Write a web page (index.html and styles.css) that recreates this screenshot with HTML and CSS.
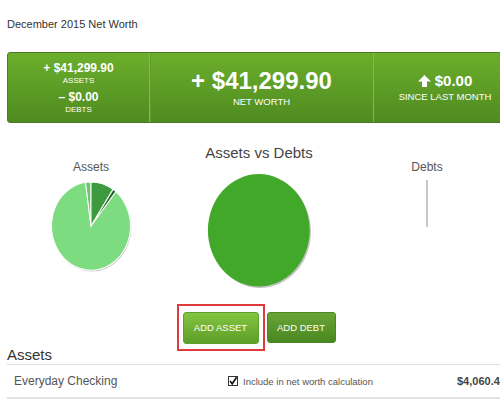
FILE: index.html
```html
<!DOCTYPE html>
<html>
	<head>
		<meta charset="utf-8">
		<title>Net Worth</title>
		<link rel="stylesheet" href="styles.css">
	</head>
	<body>
		<div id="page">
			<h1 class="page-title">December 2015 Net Worth</h1>

			<!-- 顶部汇总栏 -->
			<div class="summary">
				<div class="summary-cell">
					<div class="amount-sm">+ $41,299.90</div>
					<div class="label-sm">ASSETS</div>
					<div class="amount-sm debts">&ndash; $0.00</div>
					<div class="label-sm">DEBTS</div>
				</div>
				<div class="summary-cell">
					<div class="amount-lg">+ $41,299.90</div>
					<div class="label-md">NET WORTH</div>
				</div>
				<div class="summary-cell">
					<div class="amount-md">
						<svg class="arrow" width="13" height="12" viewBox="0 0 13 12">
							<polygon points="6.5,0 13,6.5 9,6.5 9,12 4,12 4,6.5 0,6.5" fill="#fff"/>
						</svg>$0.00
					</div>
					<div class="label-md">SINCE LAST MONTH</div>
				</div>
			</div>

			<!-- 图表 -->
			<div class="charts">
				<div class="chart side">
					<div class="chart-label">Assets</div>
					<svg class="pie-sm" width="84" height="94" viewBox="0 0 100 100" preserveAspectRatio="none">
						<circle cx="51" cy="51.5" r="47" fill="#c9c9c9"/>
						<g stroke="#fff" stroke-width="1.2">
							<path d="M50,50 L79.58,13.48 A47,47 0 1,1 43.46,3.47 Z" fill="#7ddc80"/>
							<path d="M50,50 L43.46,3.47 A47,47 0 0,1 50,3 Z" fill="#6cc56f"/>
							<path d="M50,50 L50,3 A47,47 0 0,1 76.28,11.04 Z" fill="#3e9a3f"/>
							<path d="M50,50 L76.28,11.04 A47,47 0 0,1 79.58,13.48 Z" fill="#1b671c"/>
						</g>
					</svg>
				</div>
				<div class="chart">
					<div class="chart-title">Assets vs Debts</div>
					<svg class="pie-lg" width="106" height="117" viewBox="0 0 100 100" preserveAspectRatio="none">
						<circle cx="51" cy="51.2" r="48" fill="#c4c4c4"/>
						<circle cx="49.8" cy="49.8" r="48" fill="#42a829"/>
					</svg>
				</div>
				<div class="chart side">
					<div class="chart-label">Debts</div>
					<div class="empty-bar"></div>
				</div>
			</div>

			<div class="actions">
				<a class="btn btn-asset" href="javascript:void(0);">ADD ASSET</a>
				<a class="btn btn-debt" href="javascript:void(0);">ADD DEBT</a>
			</div>

			<h2 class="section-title">Assets</h2>
			<div class="account-row">
				<div class="account-name">Everyday Checking</div>
				<div class="account-include">
					<svg class="check" width="10" height="10" viewBox="0 0 10 10">
						<rect x="0.5" y="0.5" width="9" height="9" fill="#fff" stroke="#333"/>
						<path d="M2,5 L4.2,7.8 L8.6,1.2" fill="none" stroke="#111" stroke-width="1.6"/>
					</svg>
					Include in net worth calculation
				</div>
				<div class="account-amount">$4,060.41</div>
			</div>
		</div>
	</body>
</html>
```

FILE: styles.css
```css
* {
	padding: 0;
	margin: 0;
	box-sizing: border-box;
}
html, body {
	width: 500px;
	height: 400px;
	overflow: hidden;
	background-color: #FFFFFF;
}
body {
	font-family: "Liberation Sans", Arial, sans-serif;
	color: #555;
}
#page {
	width: 517px;
	padding-left: 7px;
}
.page-title {
	margin-top: 17px;
	font-size: 11px;
	line-height: 14px;
	font-weight: normal;
	color: #333;
}

/* 汇总栏 */
.summary {
	display: flex;
	margin-top: 21px;
	height: 71px;
	border: 1px solid #4a7a26;
	border-radius: 3px;
	background: linear-gradient(#6cae2c, #4f8b20);
	color: #FFFFFF;
	text-align: center;
	overflow: hidden;
}
.summary-cell {
	display: flex;
	flex-direction: column;
	justify-content: center;
}
.summary-cell:nth-child(1) {
	width: 141px;
}
.summary-cell:nth-child(2) {
	width: 224px;
	border-left: 1px solid #80bd44;
	box-shadow: inset 1px 0 0 #5f9c2a;
}
.summary-cell:nth-child(3) {
	flex: 1;
	border-left: 1px solid #80bd44;
}
.amount-sm {
	font-size: 12px;
	line-height: 14px;
	font-weight: bold;
}
.amount-sm.debts {
	margin-top: 4px;
}
.label-sm {
	font-size: 8px;
	line-height: 11px;
}
.amount-lg {
	font-size: 24px;
	line-height: 28px;
	font-weight: bold;
}
.amount-md {
	font-size: 15px;
	line-height: 18px;
	font-weight: bold;
}
.arrow {
	margin-right: 4px;
	vertical-align: -1px;
}
.label-md {
	font-size: 9.5px;
	line-height: 13px;
}

/* 图表 */
.charts {
	display: grid;
	grid-template-columns: 168px 168px 168px;
	margin-top: 21px;
}
.chart {
	display: flex;
	flex-direction: column;
	align-items: center;
}
.chart.side {
	padding-top: 16px;
}
.chart-label {
	font-size: 12px;
	line-height: 14px;
	color: #555;
}
.chart-title {
	font-size: 15px;
	line-height: 18px;
	color: #444;
}
.pie-sm {
	margin-top: 5px;
}
.pie-lg {
	margin-top: 10px;
}
.empty-bar {
	margin-top: 6px;
	width: 2px;
	height: 47px;
	background-color: #c8c8c8;
}

/* 按钮 */
.actions {
	display: flex;
	justify-content: center;
	align-items: flex-start;
	gap: 8px;
	width: 504px;
	margin-top: 23px;
}
.btn {
	display: block;
	color: #FFFFFF;
	font-size: 9.5px;
	text-decoration: none;
	text-align: center;
	border-radius: 3px;
}
.btn-asset {
	position: relative;
	width: 76px;
	height: 32px;
	line-height: 30px;
	border: 1px solid #5f9f2c;
	background: linear-gradient(#84c442, #5d9f26);
}
/* 红色高亮框 */
.btn-asset::after {
	content: "";
	position: absolute;
	top: -9px;
	bottom: -8px;
	left: -7px;
	right: -7px;
	border: 2px solid #e03a3a;
}
.btn-debt {
	width: 69px;
	height: 31px;
	line-height: 29px;
	border: 1px solid #4e8623;
	background: linear-gradient(#69a536, #4a871f);
}

/* 资产列表 */
.section-title {
	margin-top: 2px;
	font-size: 15px;
	line-height: 18px;
	font-weight: normal;
	color: #333;
	border-bottom: 1px solid #dddddd;
}
.account-row {
	display: grid;
	grid-template-columns: 214px 229px auto;
	align-items: center;
	height: 34px;
	padding-left: 7px;
	border-bottom: 2px solid #e2e2e2;
}
.account-name {
	font-size: 12px;
	line-height: 14px;
	color: #555;
}
.account-include {
	display: flex;
	align-items: center;
	font-size: 9.5px;
	color: #555;
}
.check {
	margin-right: 5px;
}
.account-amount {
	font-size: 11px;
	font-weight: bold;
	color: #444;
	white-space: nowrap;
}
```
